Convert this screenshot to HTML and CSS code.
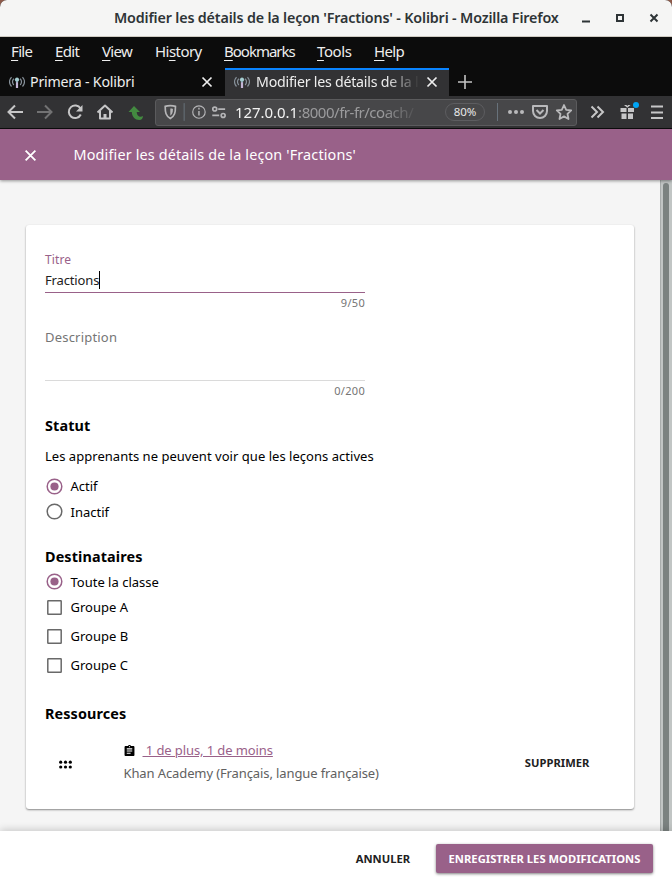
FILE: index.html
```
<!DOCTYPE html>
<html lang="fr">
<head>
<meta charset="utf-8">
<title>Modifier les détails de la leçon 'Fractions' - Kolibri</title>
<link rel="stylesheet" href="styles.css">
</head>
<body>
<svg class="defs" aria-hidden="true">
  <symbol id="antenna" viewBox="0 0 16 16">
    <g fill="none" stroke="#87919a" stroke-width="1.200">
      <path d="M2.500 3.200C.1 6 .1 9.700 2.500 12.500M4.800 4.700C3.300 6.500 3.300 9.200 4.800 11M13.500 3.200c2.400 2.800 2.400 6.500 0 9.300M11.200 4.700c1.500 1.800 1.500 4.500 0 6.300"/>
    </g>
    <path d="M8 7v7" stroke="#c4b5d6" stroke-width="2.200"/>
    <path d="M5.500 5.500h5L8 9z" fill="#7fa4ad"/>
    <circle cx="8" cy="5.500" r="2" fill="#a5cdd0"/>
  </symbol>
  <symbol id="cross" viewBox="0 0 12 12"><path d="M1.500 1.500l9 9M10.500 1.500l-9 9" fill="none" stroke="currentColor" stroke-width="1.700"/></symbol>
  <symbol id="radio-off" viewBox="0 0 17 17"><circle cx="8.500" cy="8.500" r="7.300" fill="none" stroke="#696969" stroke-width="1.500"/></symbol>
  <symbol id="radio-on" viewBox="0 0 17 17"><circle cx="8.500" cy="8.500" r="7.300" fill="none" stroke="#996189" stroke-width="1.500"/><circle cx="8.500" cy="8.500" r="4.100" fill="#996189"/></symbol>
  <symbol id="box" viewBox="0 0 17 17"><rect x="1.800" y="1.800" width="13.400" height="13.400" rx=".5" fill="none" stroke="#696969" stroke-width="1.500"/></symbol>
</svg>
<div class="window">
  <header class="titlebar">
    <span class="wintitle">Modifier les détails de la leçon 'Fractions' - Kolibri - Mozilla Firefox</span>
    <svg class="winbtns" viewBox="0 0 78 14"><path d="M1 10.500h8" stroke="#2e3436" stroke-width="2"/><rect x="36" y="4" width="6" height="6" fill="none" stroke="#2e3436" stroke-width="2"/><path d="M69.500 3.500l7 7M76.500 3.500l-7 7" stroke="#2e3436" stroke-width="2"/></svg>
  </header>
  <nav class="menubar">
    <span class="m1"><u>F</u>ile</span><span class="m2"><u>E</u>dit</span><span class="m3"><u>V</u>iew</span><span class="m4">Hi<u>s</u>tory</span><span class="m5"><u>B</u>ookmarks</span><span class="m6"><u>T</u>ools</span><span class="m7"><u>H</u>elp</span>
  </nav>
  <div class="tabs">
    <div class="tab"><svg class="fav"><use href="#antenna"/></svg><span class="tabtext">Primera - Kolibri</span><svg class="tabx"><use href="#cross"/></svg></div>
    <div class="tab active"><svg class="fav"><use href="#antenna"/></svg><span class="tabtext faded">Modifier les détails de la l</span><svg class="tabx"><use href="#cross"/></svg></div>
    <svg class="newtab" viewBox="0 0 14 14"><path d="M7 0v14M0 7h14" stroke="#c4c4c4" stroke-width="1.600"/></svg>
  </div>
  <div class="toolbar">
    <svg class="navicons" viewBox="0 0 155 32" fill="none" stroke="#c6c6c7" stroke-width="2">
      <path d="M23 16H8.500M15 9.500L8.500 16l6.500 6.500"/>
      <path d="M37 16h14.500M45 9.500l6.500 6.500-6.500 6.500" stroke="#727273"/>
      <path d="M80.500 12.500a6.300 6.300 0 1 0 .3 6"/><path d="M82.500 9v6.500H76z" fill="#c6c6c7" stroke="none"/>
      <path d="M97.500 16.500L105 9.500l7.500 7M100 15v7.500h10V15" stroke-linejoin="round"/><path d="M105 22.500V18" stroke-width="3"/>
      <path d="M134 10l-5.500 6h3.300c.2 4.500 3 8 7.700 8 2 0 3.300-1.500 3.500-4-2.800 2-6.300 0-6.300-4h3.300z" fill="#438a40" stroke="none"/>
    </svg>
    <div class="urlbar">
      <svg class="urlleft" viewBox="0 0 80 25" fill="none" stroke="#b5b5b7" stroke-width="1.700">
        <path d="M14.500 5.500c2 0 3.800.3 5.200.8 0 6-.6 9.700-5.200 12.200-4.600-2.500-5.200-6.200-5.200-12.200 1.400-.5 3.200-.8 5.200-.8z"/>
        <path d="M14.500 8.500c1.200 0 2 .1 2.700.4-.1 3.800-.8 5.400-2.700 6.800z" fill="#b5b5b7" stroke="none"/>
        <path d="M28.500 3v18" stroke="#68727b" stroke-width="1"/>
        <circle cx="43.500" cy="12" r="6.300" stroke-width="1.200"/><path d="M43.500 11v4.500M43.500 7.800v1.700" stroke-width="1.500"/>
        <circle cx="59.500" cy="9" r="2"/><path d="M63 9h7M57 15.500h7"/><circle cx="68" cy="15.500" r="2"/>
      </svg>
      <span class="url"><b>127.0.0.1</b>:8000/fr-fr/coach/</span>
      <span class="zoom">80%</span>
      <svg class="urlright" viewBox="0 0 80 25" fill="none" stroke="#b9b9bb" stroke-width="2">
        <path d="M1.500 3v18" stroke="#68727b" stroke-width="1"/>
        <g fill="#b9b9bb" stroke="none"><circle cx="14" cy="12" r="2"/><circle cx="20" cy="12" r="2"/><circle cx="26" cy="12" r="2"/></g>
        <path d="M37 6h14v5a7 7 0 0 1-14 0z" stroke-linejoin="round"/><path d="M40.500 10l3.500 3.500 3.500-3.500"/>
        <path d="M68 5l2.200 4.800 5 .6-3.700 3.500 1 5.100-4.500-2.600-4.500 2.600 1-5.100-3.700-3.500 5-.6z" stroke-width="1.800" stroke-linejoin="round"/>
      </svg>
    </div>
    <svg class="tools" viewBox="0 0 95 32" fill="none" stroke="#c6c6c7" stroke-width="2">
      <path d="M14.500 10.500l5.500 5.500-5.500 5.500M20.500 10.500l5.500 5.500-5.500 5.500"/>
      <path d="M43.500 12h6v4h-6zM51 12h6v4h-6zM44.500 17.500h5v5.500h-5zM51 17.500h5v5.500h-5zM50 11.500l-3-2.500h2.500l.8 1 .8-1h2.500l-3 2.500z" fill="#c6c6c7" stroke="none"/>
      <circle cx="59" cy="9" r="3" fill="#00a5f5" stroke="none"/>
      <path d="M74 10.500h12M74 16.500h12M74 22h12"/>
    </svg>
  </div>
  <div class="appbar"><svg class="appx"><use href="#cross"/></svg><span>Modifier les détails de la leçon 'Fractions'</span></div>
  <main class="page">
    <section class="card">
      <div class="field focus"><label>Titre</label><div class="input"><span>Fractions</span><i class="caret"></i></div><small>9/50</small></div>
      <div class="field desc"><label>Description</label><div class="input"></div><small>0/200</small></div>
      <h2>Statut</h2>
      <p>Les apprenants ne peuvent voir que les leçons actives</p>
      <div class="opt radio1"><svg class="mark"><use href="#radio-on"/></svg><span>Actif</span></div>
      <div class="opt radio2"><svg class="mark raised"><use href="#radio-off"/></svg><span>Inactif</span></div>
      <h2 class="dest">Destinataires</h2>
      <div class="opt all"><svg class="mark raised"><use href="#radio-on"/></svg><span>Toute la classe</span></div>
      <div class="opt check"><svg class="mark"><use href="#box"/></svg><span>Groupe A</span></div>
      <div class="opt check"><svg class="mark"><use href="#box"/></svg><span>Groupe B</span></div>
      <div class="opt check"><svg class="mark"><use href="#box"/></svg><span>Groupe C</span></div>
      <h2 class="res">Ressources</h2>
      <div class="resource">
        <svg class="grip" viewBox="0 0 13 8"><circle cx="1.700" cy="1.700" r="1.600"/><circle cx="6.500" cy="1.700" r="1.600"/><circle cx="11.300" cy="1.700" r="1.600"/><circle cx="1.700" cy="6.500" r="1.600"/><circle cx="6.500" cy="6.500" r="1.600"/><circle cx="11.300" cy="6.500" r="1.600"/></svg>
        <div class="info">
          <div class="resname"><svg class="clip" viewBox="3 1 18 20"><path d="M19 3h-4.180C14.400 1.840 13.300 1 12 1s-2.400.84-2.820 2H5c-1.100 0-2 .9-2 2v14c0 1.100.9 2 2 2h14c1.100 0 2-.9 2-2V5c0-1.100-.9-2-2-2zm-7 0c.55 0 1 .45 1 1s-.45 1-1 1-1-.45-1-1 .45-1 1-1zm2 14H7v-2h7v2zm3-4H7v-2h10v2zm0-4H7V7h10v2z"/></svg><a>&nbsp;1 de plus, 1 de moins</a></div>
          <div class="source">Khan Academy (Français, langue française)</div>
        </div>
        <span class="remove">SUPPRIMER</span>
      </div>
    </section>
    <div class="scroll"><i></i></div>
  </main>
  <footer class="actions"><span class="cancel">ANNULER</span><span class="save">ENREGISTRER LES MODIFICATIONS</span></footer>
</div>
</body>
</html>
```
FILE: styles.css
```
* { box-sizing: border-box; }
body { margin: 0; font: 13px/20px "Noto Sans", sans-serif; color: #000; background: #8d5a4a; }
svg { display: block; flex: none; }
.defs { display: none; }
.window { width: 672px; height: 889px; display: flex; flex-direction: column; overflow: hidden; border-radius: 7px 7px 0 0; background: #0c0c0c; white-space: nowrap; }

.titlebar { height: 37px; flex: none; display: flex; align-items: center; background: #f5f5f4; border-bottom: 1px solid #cfcbc2; padding-left: 114px; color: #2e3436; }
.wintitle { width: 467px; font: 600 14.3px/20px "Noto Sans", sans-serif; letter-spacing: -.16px; }
.winbtns { width: 78px; height: 14px; }

.menubar { height: 31px; flex: none; display: flex; color: #eee; font-size: 15px; line-height: 29px; padding-left: 11px; letter-spacing: -.65px; }
.menubar u { text-underline-offset: 3px; }
.m1 { width: 44px; }
.m2 { width: 47px; }
.m3 { width: 53px; }
.m4 { width: 69px; letter-spacing: -.55px; }
.m5 { width: 93px; letter-spacing: -1px; }
.m6 { width: 57px; letter-spacing: -.4px; }

.tabs { height: 28px; flex: none; display: flex; align-items: center; color: #eee; }
.tab { width: 225px; height: 28px; display: flex; align-items: center; padding: 0 12px 0 9px; font-size: 14.200px; }
.tab.active { width: 224px; background: #323234; border-top: 2px solid #0a84ff; padding: 0 11px 2px 9px; }
.fav { width: 16px; height: 16px; margin-right: 5px; }
.tabtext { width: 163px; margin-right: 9px; letter-spacing: -.2px; }
.active .fav { margin-right: 6px; }
.active .tabtext { width: 168px; margin-right: 3px; letter-spacing: -.24px; }
.faded { -webkit-mask-image: linear-gradient(90deg, #000 78%, transparent 98%); mask-image: linear-gradient(90deg, #000 78%, transparent 98%); }
.tabx { width: 12px; height: 12px; color: #eee; }
.newtab { width: 14px; height: 14px; margin-left: 9px; }

.toolbar { height: 33px; flex: none; display: flex; background: #323234; border-bottom: 1px solid #0c0c0d; }
.navicons { width: 155px; height: 32px; }
.urlbar { width: 422px; height: 27px; margin-top: 3px; display: flex; align-items: center; border: 1px solid #5b5b5d; border-radius: 3px; background: #474749; color: #9b9b9d; }
.urlleft { width: 79px; height: 25px; }
.url { width: 210px; height: 22px; font-size: 15px; letter-spacing: -.48px; -webkit-mask-image: linear-gradient(90deg, #000 70%, transparent 88%); mask-image: linear-gradient(90deg, #000 70%, transparent 88%); }
.url b { color: #f2f2f2; font-weight: 400; letter-spacing: -.05px; }
.zoom { width: 40px; height: 18px; margin-bottom: 2px; border: 1px solid #5d5d60; border-radius: 9px; color: #e8e8e8; font-size: 11.500px; line-height: 16px; text-align: center; }
.urlright { width: 80px; height: 25px; margin-left: 11px; }
.tools { width: 95px; height: 32px; }

.appbar { height: 51px; flex: none; display: flex; align-items: center; position: relative; z-index: 1; padding-left: 24px; background: #996189; color: #fff; font-size: 14.400px; letter-spacing: .15px; box-shadow: 0 1px 3px rgba(0,0,0,.4); }
.appx { width: 13px; height: 13px; margin: 2px 36.500px 0 0; }

.page { height: 651px; flex: none; display: flex; justify-content: space-between; background: #f5f5f5; padding-left: 26px; }
.card { width: 608px; height: 584px; margin-top: 45px; padding: 25px 19px 0; background: #fff; border-radius: 3px; box-shadow: 0 1px 2px rgba(0,0,0,.45); }
.scroll { width: 12px; background: #c1c5c4; border-left: 1px solid #a9adac; padding: 3px 3px 0 2px; }
.scroll i { display: block; height: 648px; width: 6px; background: #7b8280; border-radius: 3px 3px 0 0; }

.field { width: 320px; color: #757575; }
.field label { display: block; font-size: 12px; height: 20px; }
.focus label { color: #996189; letter-spacing: .1px; }
.focus .input { height: 23px; display: flex; align-items: center; padding-bottom: 2px; border-bottom: 1px solid #996189; color: #212121; letter-spacing: -.15px; }
.caret { width: 1px; height: 18px; background: #000; }
.field small { display: block; text-align: right; font-size: 11px; line-height: 20px; letter-spacing: .3px; }
.desc { margin-top: 14px; }
.desc label { font-size: 13px; letter-spacing: .2px; }
.desc .input { height: 34px; border-bottom: 1px solid #dadada; }

h2 { margin: 15px 0 0; font-size: 14.400px; line-height: 20px; letter-spacing: .12px; }
p { margin: 10px 0 0; letter-spacing: .03px; }
.opt { display: flex; align-items: center; gap: 7.500px; height: 20px; padding-left: 1px; }
.radio1 { margin-top: 10px; }
.radio2 { margin-top: 6px; }
.mark { width: 17px; height: 17px; }
.raised { margin-bottom: 1px; }
.dest { margin-top: 25px; }
.all { margin-top: 5px; }
.check { margin-top: 5px; }
.check + .check { margin-top: 9px; }
.res { margin-top: 29px; }
.resource { display: flex; align-items: center; margin-top: 14px; padding: 0 25.500px 0 14px; height: 47px; }
.grip { width: 13px; height: 9px; margin: 5px 51.500px 0 0; }
.info { flex: 1; color: #616161; }
.resname { display: flex; align-items: center; height: 23px; }
.clip { width: 11px; height: 11px; margin-right: 8px; }
.resname a { color: #996189; text-decoration: underline; letter-spacing: -.1px; }
.source { height: 23px; line-height: 23px; letter-spacing: -.11px; }
.remove, .actions { font-size: 11.200px; font-weight: 700; color: #212121; }
.remove { padding-top: 3px; letter-spacing: .05px; }

.actions { position: relative; z-index: 1; height: 58px; flex: none; display: flex; align-items: center; justify-content: flex-end; background: #fff; padding: 0 19px 2px 0; box-shadow: 0 -1px 8px rgba(0,0,0,.2); }
.cancel { margin-right: 26px; }
.save { width: 217px; height: 29px; margin-bottom: 1px; line-height: 29px; text-align: center; letter-spacing: .03px; color: #fff; background: #996189; border-radius: 2px; box-shadow: 0 1px 3px rgba(0,0,0,.5); }
```
